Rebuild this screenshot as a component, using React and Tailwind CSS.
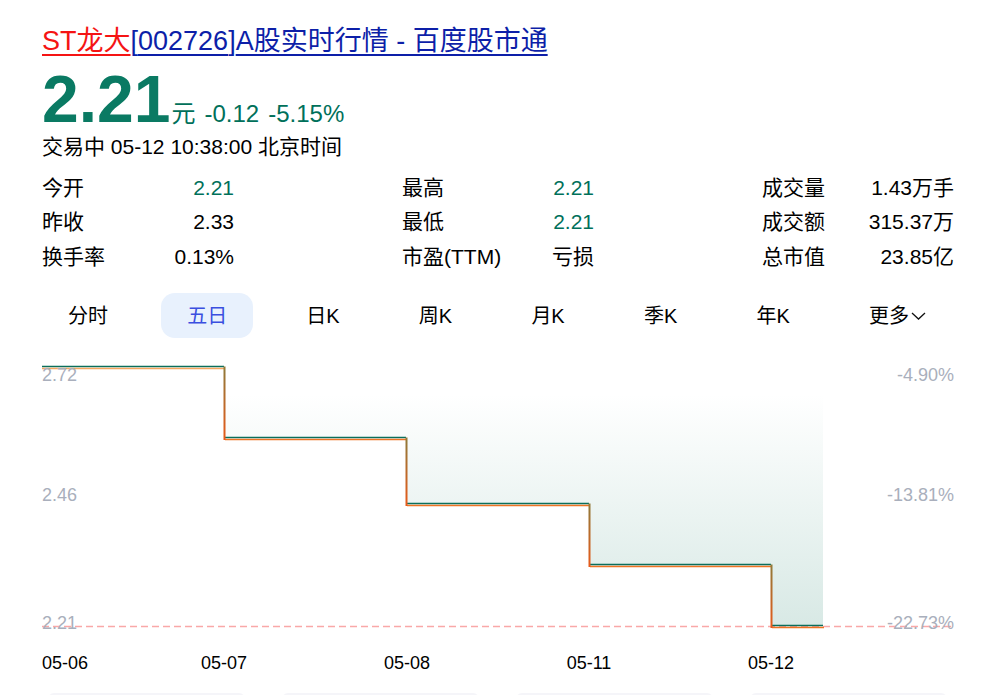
const FONT = '"Liberation Sans", "Noto Sans CJK SC", sans-serif';

const stats = [
  [
    { label: "今开", value: "2.21", green: true },
    { label: "昨收", value: "2.33" },
    { label: "换手率", value: "0.13%" },
  ],
  [
    { label: "最高", value: "2.21", green: true },
    { label: "最低", value: "2.21", green: true },
    { label: "市盈(TTM)", value: "亏损" },
  ],
  [
    { label: "成交量", value: "1.43万手" },
    { label: "成交额", value: "315.37万" },
    { label: "总市值", value: "23.85亿" },
  ],
];

const tabs = ["分时", "五日", "日K", "周K", "月K", "季K", "年K"];

// each step of the line: [x start, x end, y]
const steps = [
  [42, 224, 366.5],
  [224, 406, 437.5],
  [406, 589, 503.5],
  [589, 771, 564.5],
  [771, 823, 625.5],
];

const Chart = () => (
  <svg viewBox="42 360 912 320" className="block w-[912px] h-[320px]" style={{ fontFamily: FONT }}>
    <defs>
      <linearGradient id="fade" gradientUnits="userSpaceOnUse" x1="0" y1="395" x2="0" y2="626">
        <stop offset="0" stopColor="#ffffff" />
        <stop offset="1" stopColor="#d8e9e5" />
      </linearGradient>
      <linearGradient id="drop" x1="0" y1="0" x2="0" y2="1">
        <stop offset="0" stopColor="#8f7a3a" />
        <stop offset="1" stopColor="#e85a1a" />
      </linearGradient>
    </defs>
    <polygon
      points="224,367 823,367 823,626 772,626 772,566 590,566 590,505 407,505 407,438 224,438"
      fill="url(#fade)"
    />
    <line x1="42" y1="626.5" x2="954" y2="626.5" stroke="#f9a8a8" strokeWidth="1.5" strokeDasharray="7 4" />

    {steps.map(([x1, x2, y]) => (
      <g key={y}>
        <line x1={x1} y1={y} x2={x2} y2={y} stroke="#0b6f5c" strokeWidth="1.5" />
        <line x1={x1 === 42 ? 42 : x1 + 1} y1={y + 2} x2={x2 + 1} y2={y + 2} stroke={y === 366.5 ? "#f5a860" : "#ee7424"} strokeWidth="1.5" />
      </g>
    ))}
    {steps.slice(0, -1).map(([, x2, y], i) => (
      <rect key={x2} x={x2 - 0.5} y={y} width="2" height={steps[i + 1][2] + 2.5 - y} fill="url(#drop)" />
    ))}

    <g fill="#a9afbc" fontSize="18">
      <text x="42" y="381">2.72</text>
      <text x="42" y="501">2.46</text>
      <text x="42" y="629">2.21</text>
      <text x="954" y="381" textAnchor="end">-4.90%</text>
      <text x="954" y="501" textAnchor="end">-13.81%</text>
      <text x="954" y="629" textAnchor="end">-22.73%</text>
    </g>
    <g fill="#000000" fontSize="18">
      <text x="42" y="669">05-06</text>
      <text x="224" y="669" textAnchor="middle">05-07</text>
      <text x="407" y="669" textAnchor="middle">05-08</text>
      <text x="589" y="669" textAnchor="middle">05-11</text>
      <text x="771" y="669" textAnchor="middle">05-12</text>
    </g>
  </svg>
);

const App = () => {
  return (
    <div
      className="w-[999px] h-[695px] overflow-hidden bg-white text-black pl-[42px] pr-[45px] pt-[21px]"
      style={{ fontFamily: FONT }}
    >
      <h1 className="text-[27px] leading-[40px] font-normal whitespace-nowrap text-[#0d1fa8]">
        <a className="text-[#f51414] underline decoration-2 underline-offset-[4px]">ST龙大</a>[
        <a className="underline decoration-2 underline-offset-[4px]">002726</a>]
        <a className="underline decoration-2 underline-offset-[4px]">A股实时行情 - 百度股市通</a>
      </h1>

      <div className="flex items-end h-[66px] mt-[5px] text-[#00705a] whitespace-nowrap">
        <span className="text-[66px] leading-[66px] font-bold text-[#0a7a63]">2.21</span>
        <span className="text-[24px] leading-[36px] ml-[1px]">元</span>
        <span className="text-[24px] leading-[36px] ml-[9px]">-0.12</span>
        <span className="text-[24px] leading-[36px] ml-[9px]">-5.15%</span>
      </div>

      <div className="text-[21px] leading-[28px] mt-[1px]">交易中 05-12 10:38:00 北京时间</div>

      <div className="flex justify-between mt-[9px]">
        {stats.map((col, i) => (
          <div key={i} className="w-[192px] flex flex-col">
            {col.map((item) => (
              <div key={item.label} className="flex justify-between h-[34.5px] items-center text-[21px] whitespace-nowrap">
                <span>{item.label}</span>
                <span className={item.green ? "text-[#00705a]" : ""}>{item.value}</span>
              </div>
            ))}
          </div>
        ))}
      </div>

      <div className="flex justify-between mt-[19px] text-[20px] whitespace-nowrap">
        {tabs.map((tab) => (
          <div
            key={tab}
            className={
              tab === "五日"
                ? "h-[45px] px-[26px] pt-[2px] flex items-center rounded-[14px] bg-[#e8f1fd] text-[#3a4fe0]"
                : "h-[45px] px-[26px] pt-[2px] flex items-center"
            }
          >
            {tab}
          </div>
        ))}
        <div className="h-[45px] pl-[26px] pr-[28px] pt-[2px] flex items-center">
          更多
          <svg width="15" height="8" viewBox="0 0 15 8" className="ml-[2px]">
            <polyline points="1,1 7.5,7 14,1" fill="none" stroke="#111111" strokeWidth="1.3" />
          </svg>
        </div>
      </div>

      <div className="mt-[22px]">
        <Chart />
      </div>

      <div className="flex gap-[37px] ml-[6px] mt-[13px]">
        {[0, 1, 2, 3].map((n) => (
          <div key={n} className="w-[197px] h-[40px] rounded-[6px] bg-[#f5f5f9]" />
        ))}
      </div>
    </div>
  );
};

export default App;
